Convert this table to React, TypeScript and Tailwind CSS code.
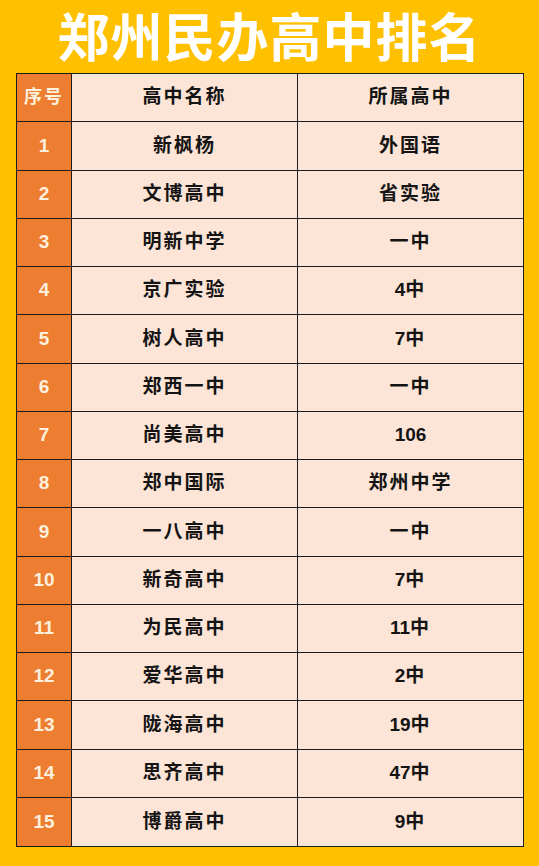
import React from 'react';

const rows: [string, string, string][] = [
  ['1', '新枫杨', '外国语'],
  ['2', '文博高中', '省实验'],
  ['3', '明新中学', '一中'],
  ['4', '京广实验', '4中'],
  ['5', '树人高中', '7中'],
  ['6', '郑西一中', '一中'],
  ['7', '尚美高中', '106'],
  ['8', '郑中国际', '郑州中学'],
  ['9', '一八高中', '一中'],
  ['10', '新奇高中', '7中'],
  ['11', '为民高中', '11中'],
  ['12', '爱华高中', '2中'],
  ['13', '陇海高中', '19中'],
  ['14', '思齐高中', '47中'],
  ['15', '博爵高中', '9中'],
];

const font = { fontFamily: '"Liberation Sans", "Noto Sans CJK SC", sans-serif' };

// digits keep normal spacing, han characters get a little extra
function Label({ text }: { text: string }) {
  const parts = text.match(/\d+|\D+/g) ?? [];
  return (
    <span>
      {parts.map((p, i) => (
        <span key={i} className={/\d/.test(p) ? 'tracking-normal' : 'tracking-[2px]'}>{p}</span>
      ))}
    </span>
  );
}

export default function App() {
  return (
    <div className="h-[866px] w-[539px] overflow-hidden bg-[#ffc000]" style={font}>
      <h1 className="flex h-[73px] items-center justify-center pt-[4px] text-[52px] font-bold leading-none tracking-[1px] text-white">
        郑州民办高中排名
      </h1>

      <div className="mx-[16px] w-[508px] border border-[#1c1c1c]">
        <Row no="序号" name="高中名称" parent="所属高中" head />
        {rows.map(([no, name, parent], i) => (
          <Row key={no} no={no} name={name} parent={parent} last={i === rows.length - 1} />
        ))}
      </div>
    </div>
  );
}

function Row({ no, name, parent, head, last }: { no: string; name: string; parent: string; head?: boolean; last?: boolean }) {
  return (
    <div className={`grid h-[48.25px] grid-cols-[55px_226px_1fr] ${last ? '' : 'border-b border-[#1c1c1c]'}`}>
      <div className={`flex items-center justify-center border-r border-[#1c1c1c] bg-[#ed7d31] font-bold text-[#fdf0dc] ${head ? 'text-[18px] tracking-[2px]' : 'text-[19px]'}`}>
        {no}
      </div>
      <div className="flex items-center justify-center border-r border-[#1c1c1c] bg-[#fce4d6] text-[19px] font-bold text-[#141414]">
        <Label text={name} />
      </div>
      <div className="flex items-center justify-center bg-[#fce4d6] text-[19px] font-bold text-[#141414]">
        <Label text={parent} />
      </div>
    </div>
  );
}
